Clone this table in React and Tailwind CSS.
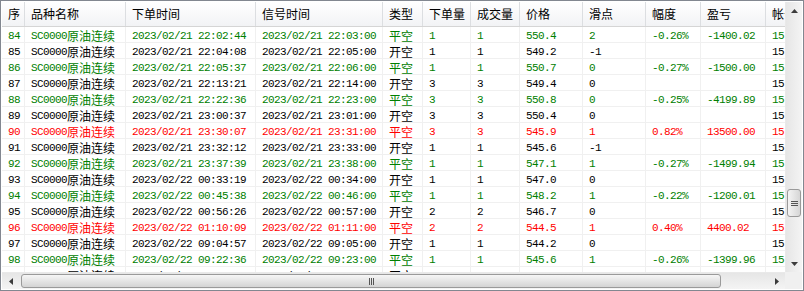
import React from "react";

const GREEN = "text-[#008000]";
const RED = "text-[#ff0000]";
const BLACK = "text-black";

const HEAD = ["序", "品种名称", "下单时间", "信号时间", "类型", "下单量", "成交量", "价格", "滑点", "幅度", "盈亏", "帐号"];

const ROWS = [
  ["84", "2023/02/21 22:02:44", "2023/02/21 22:03:00", "平空", "1", "1", "550.4", "2", "-0.26%", "-1400.02", GREEN],
  ["85", "2023/02/21 22:04:08", "2023/02/21 22:05:00", "开空", "1", "1", "549.2", "-1", "", "", BLACK],
  ["86", "2023/02/21 22:05:37", "2023/02/21 22:06:00", "平空", "1", "1", "550.7", "0", "-0.27%", "-1500.00", GREEN],
  ["87", "2023/02/21 22:13:21", "2023/02/21 22:14:00", "开空", "3", "3", "549.4", "0", "", "", BLACK],
  ["88", "2023/02/21 22:22:36", "2023/02/21 22:23:00", "平空", "3", "3", "550.8", "0", "-0.25%", "-4199.89", GREEN],
  ["89", "2023/02/21 23:00:37", "2023/02/21 23:01:00", "开空", "3", "3", "550.4", "0", "", "", BLACK],
  ["90", "2023/02/21 23:30:07", "2023/02/21 23:31:00", "平空", "3", "3", "545.9", "1", "0.82%", "13500.00", RED],
  ["91", "2023/02/21 23:32:12", "2023/02/21 23:33:00", "开空", "1", "1", "545.6", "-1", "", "", BLACK],
  ["92", "2023/02/21 23:37:39", "2023/02/21 23:38:00", "平空", "1", "1", "547.1", "1", "-0.27%", "-1499.94", GREEN],
  ["93", "2023/02/22 00:33:19", "2023/02/22 00:34:00", "开空", "1", "1", "547.0", "0", "", "", BLACK],
  ["94", "2023/02/22 00:45:38", "2023/02/22 00:46:00", "平空", "1", "1", "548.2", "1", "-0.22%", "-1200.01", GREEN],
  ["95", "2023/02/22 00:56:26", "2023/02/22 00:57:00", "开空", "2", "2", "546.7", "0", "", "", BLACK],
  ["96", "2023/02/22 01:10:09", "2023/02/22 01:11:00", "平空", "2", "2", "544.5", "1", "0.40%", "4400.02", RED],
  ["97", "2023/02/22 09:04:57", "2023/02/22 09:05:00", "开空", "1", "1", "544.2", "0", "", "", BLACK],
  ["98", "2023/02/22 09:22:36", "2023/02/22 09:23:00", "平空", "1", "1", "545.6", "1", "-0.26%", "-1399.96", GREEN],
  ["99", "2023/02/22 09:27:15", "2023/02/22 09:28:00", "开空", "1", "1", "545.3", "0", "", "", BLACK],
];

const GRID = "grid grid-cols-[23px_101px_130px_127px_40px_48px_49px_63px_63px_55px_65px_80px]";

function Txt({ s }) {
  return s.split(/([\u4e00-\u9fff]+)/).map((p, i) =>
    /[\u4e00-\u9fff]/.test(p) ? (
      <span key={i} className="font-['Noto_Sans_CJK_SC',sans-serif] text-[12px] tracking-normal">{p}</span>
    ) : (
      <span key={i}>{p}</span>
    )
  );
}

function Arrow({ dir }) {
  const pts = { up: "0,4 3.5,0 7,4", down: "0,0 3.5,4 7,0", left: "4,0 0,3.5 4,7", right: "0,0 4,3.5 0,7" }[dir];
  const w = dir === "up" || dir === "down" ? 7 : 4;
  const h = dir === "up" || dir === "down" ? 4 : 7;
  return <svg width={w} height={h} viewBox={`0 0 ${w} ${h}`}><polygon points={pts} fill="#3c3c3c" /></svg>;
}

export default function App() {
  return (
    <div className="w-[804px] h-[291px] border border-[#828790] bg-white p-px flex flex-col select-none">
      <div className="flex h-[270px]">
        <div className="w-[783px] overflow-hidden">
          {/* header */}
          <div className={`${GRID} h-[25px] bg-gradient-to-b from-white to-[#f2f3f5] border-b border-[#d5d5d5]`}>
            {HEAD.map((h, i) => (
              <div key={i} className="flex items-center pl-1.5 pb-px border-r border-[#dcdee1] whitespace-nowrap overflow-hidden font-['Noto_Sans_CJK_SC',sans-serif] text-[12px] text-black">
                {h}
              </div>
            ))}
          </div>
          {/* body */}
          <div className="h-[245px] overflow-hidden">
            {ROWS.map((r) => {
              const [no, t1, t2, type, q1, q2, price, slip, amp, pnl, color] = r;
              const cells = [no, "SC0000原油连续", t1, t2, type, q1, q2, price, slip, amp, pnl, "15:38:22"];
              return (
                <div key={no} className={`${GRID} h-4 ${color}`}>
                  {cells.map((c, i) => (
                    <div key={i} className="h-4 flex items-center pl-1.5 pt-[3px] border-r border-b border-[#f0f0f0] whitespace-nowrap overflow-hidden font-['Liberation_Mono',monospace] text-[11px] tracking-[-0.6px] leading-none">
                      <Txt s={c} />
                    </div>
                  ))}
                </div>
              );
            })}
          </div>
        </div>
        {/* vertical scrollbar */}
        <div className="w-[17px] flex flex-col bg-gradient-to-r from-[#e6e6e6] to-[#f4f4f4] border-l border-[#e9e9e9]">
          <div className="h-[17px] flex items-center justify-center"><Arrow dir="up" /></div>
          <div className="h-[170px]" />
          <div className="h-[28px] mx-px rounded-[3px] border border-[#9a9a9a] bg-gradient-to-r from-[#f4f4f4] to-[#d6d6d6] flex flex-col items-center justify-center gap-px">
            <div className="w-[7px] h-px bg-[#555]" />
            <div className="w-[7px] h-px bg-[#555]" />
            <div className="w-[7px] h-px bg-[#555]" />
          </div>
          <div className="flex-1" />
          <div className="h-[17px] flex items-center justify-center"><Arrow dir="down" /></div>
        </div>
      </div>
      {/* horizontal scrollbar */}
      <div className="flex h-[17px]">
        <div className="w-[783px] flex bg-gradient-to-b from-[#e6e6e6] to-[#f4f4f4] border-t border-[#e9e9e9]">
          <div className="w-[17px] flex items-center justify-center"><Arrow dir="left" /></div>
          <div className="w-[2px]" />
          <div className="w-[700px] my-px rounded-[3px] border border-[#9a9a9a] bg-gradient-to-b from-[#f6f6f6] to-[#d4d4d4] flex items-center justify-center gap-px">
            <div className="w-px h-[7px] bg-[#555]" />
            <div className="w-px h-[7px] bg-[#555]" />
            <div className="w-px h-[7px] bg-[#555]" />
          </div>
          <div className="flex-1" />
          <div className="w-[17px] flex items-center justify-center"><Arrow dir="right" /></div>
        </div>
        <div className="w-[17px] bg-[#f0f0f0]" />
      </div>
    </div>
  );
}
